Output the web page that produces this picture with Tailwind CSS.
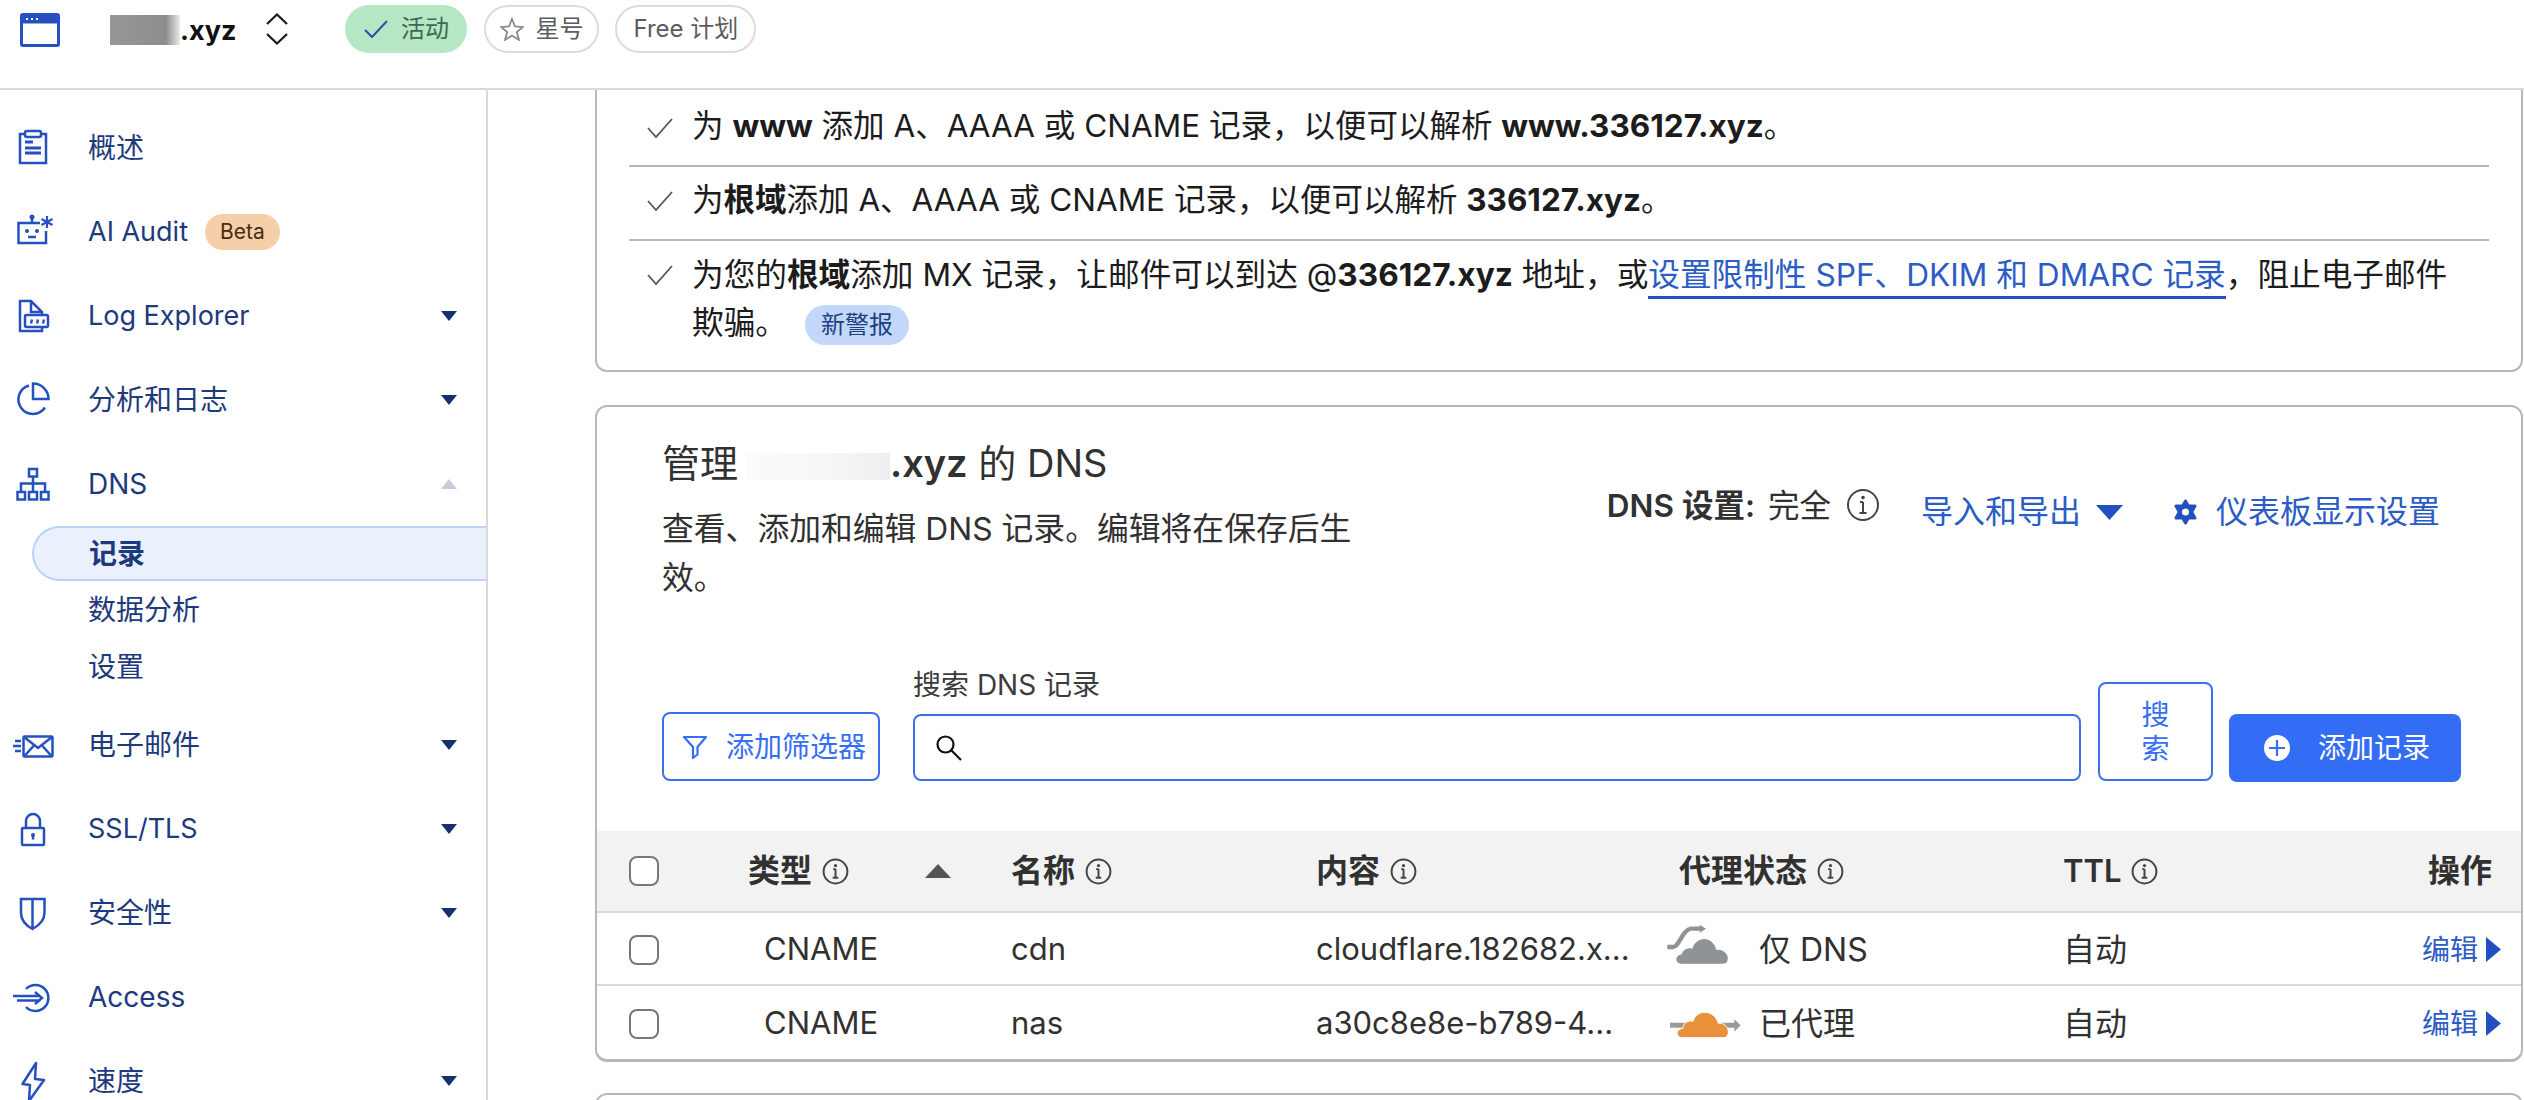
<!DOCTYPE html>
<html lang="zh-CN">
<head>
<meta charset="utf-8">
<title>DNS</title>
<script src="https://cdn.jsdelivr.net/npm/@tailwindcss/browser@4"></script>
</head>
<body class="bg-white">
<div class="w-[2524px] h-[1100px] overflow-hidden flex flex-col bg-white font-[family-name:Inter,'Noto_Sans_CJK_SC',sans-serif]">

  <!-- top bar -->
  <header class="h-[90px] shrink-0 border-b-2 border-[#d9d9d9] flex items-center pb-[31px] pl-[20px]">
    <svg width="40" height="34" viewBox="0 0 40 34" fill="none" class="mt-[2px]"><rect x="1.5" y="1.5" width="37" height="31" rx="1.5" stroke="#2450c0" stroke-width="3"/><rect x="1.5" y="1.5" width="37" height="9" fill="#2450c0"/><path d="M6 6h2M11 6h2M16 6h2" stroke="#fff" stroke-width="2"/></svg>
    <div class="ml-[50px] w-[70px] h-[30px] mt-[2px] bg-linear-to-r from-[#979797] via-[#8e8e8e] via-80% to-[#ececec]"></div>
    <span class="text-[27px] font-bold text-[#111] leading-none mt-[3px]">.xyz</span>
    <svg width="24" height="32" viewBox="0 0 24 32" fill="none" class="ml-[29px] mt-[1px]"><path d="M2 11 12 1.5 22 11M2 21l10 9.500L22 21" stroke="#1a1a1a" stroke-width="2.200"/></svg>
    <div class="ml-[56px] w-[122px] h-[48px] rounded-full bg-[#b6e7c5] flex items-center justify-center gap-[13px] text-[24px] text-[#3d6a50]">
      <svg width="24" height="18" viewBox="0 0 24 18" fill="none"><path d="M1 10l7 7L23 1" stroke="#2450a8" stroke-width="2"/></svg><span>活动</span>
    </div>
    <div class="ml-[17px] w-[115px] h-[48px] rounded-full border-2 border-[#dcdcdc] flex items-center justify-center gap-[11px] text-[24px] text-[#5c5c5c]">
      <svg width="24" height="24" viewBox="0 0 24 24" fill="none"><path d="M12 2l3 7.500 8 .5-6.200 5 2.200 8L12 18.500 5 23l2.200-8L1 10l8-.5z" stroke="#8a8a8a" stroke-width="1.800"/></svg><span>星号</span>
    </div>
    <div class="ml-[16px] w-[141px] h-[48px] rounded-full border-2 border-[#dcdcdc] flex items-center justify-center text-[24px] text-[#5c5c5c]">Free 计划</div>
  </header>

  <div class="flex-1 flex min-h-0">
    <!-- sidebar -->
    <nav class="w-[488px] shrink-0 border-r-2 border-[#d9d9d9] pt-[16px] text-[28px] text-[#1d3a7c] overflow-hidden">
      <div class="h-[84px] flex items-center">
        <svg width="66" height="44" viewBox="0 0 66 44" fill="none" stroke="#2450c0" stroke-width="2.500"><path d="M25 8h-5v29h26V8h-5"/><rect x="25" y="5" width="16" height="6" rx="2"/><path d="M25 16h8M25 22h16M25 27h16" stroke-width="2.800"/></svg>
        <span class="ml-[22px]">概述</span>
      </div>
      <div class="h-[84px] flex items-center">
        <svg width="66" height="44" viewBox="0 0 66 44" fill="none" stroke="#2450c0" stroke-width="2.500"><path d="M40 13H18.500v20H46V21"/><path d="M32 7v6"/><circle cx="32" cy="7" r="2.500" fill="#2450c0" stroke="none"/><circle cx="27" cy="21" r="2" fill="#2450c0" stroke="none"/><circle cx="37" cy="21" r="2" fill="#2450c0" stroke="none"/><path d="M28 27h8"/><path d="M47 6v12M41.500 9l11 6M52.500 9l-11 6" stroke-width="2.200"/></svg>
        <span class="ml-[22px] text-[27px]">AI Audit</span>
        <span class="ml-[17px] w-[75px] h-[36px] rounded-full bg-[#f5cfa7] text-[#4a2c10] text-[21px] flex items-center justify-center">Beta</span>
      </div>
      <div class="h-[84px] flex items-center">
        <svg width="66" height="44" viewBox="0 0 66 44" fill="none" stroke="#2450c0" stroke-width="2.500"><path d="M25 37h-5V7h11l11 11v3M42 33v4H25M31 7v11h11"/><rect x="25" y="21" width="23" height="12" rx="1.500"/><path d="M31 29.500l1-4M37 29.500l1-4M43 29.500l1-4" stroke-width="2.400"/></svg>
        <span class="ml-[22px] flex-1 text-[27px]">Log Explorer</span>
        <svg width="16" height="10" viewBox="0 0 16 10" class="mr-[29px]"><path d="M0 0h16L8 10z" fill="#16306e"/></svg>
      </div>
      <div class="h-[84px] flex items-center">
        <svg width="66" height="44" viewBox="0 0 66 44" fill="none" stroke="#2450c0" stroke-width="2.500"><path d="M33 5.500V21h15.500A15.500 15.500 0 0 0 33 5.500z"/><path d="M29 7.500A14.500 14.500 0 1 0 45 29.500"/></svg>
        <span class="ml-[22px] flex-1">分析和日志</span>
        <svg width="16" height="10" viewBox="0 0 16 10" class="mr-[29px]"><path d="M0 0h16L8 10z" fill="#16306e"/></svg>
      </div>
      <div class="h-[84px] flex items-center">
        <svg width="66" height="44" viewBox="0 0 66 44" fill="none" stroke="#2450c0" stroke-width="2.500"><rect x="29" y="7" width="8" height="7.500"/><rect x="17.500" y="30" width="7.500" height="7.500"/><rect x="29" y="30" width="8" height="7.500"/><rect x="41" y="30" width="7.500" height="7.500"/><path d="M33 14.500V30M21 30v-8.500h24V30"/></svg>
        <span class="ml-[22px] flex-1">DNS</span>
        <svg width="16" height="10" viewBox="0 0 16 10" class="mr-[29px]"><path d="M0 10h16L8 0z" fill="#c8ced9"/></svg>
      </div>
      <div class="h-[55px] ml-[32px] pl-[55px] flex items-center font-semibold bg-[#eaf1fd] border-2 border-r-0 border-[#bcd3f7] rounded-l-full">记录</div>
      <div class="h-[57px] pl-[88px] flex items-center">数据分析</div>
      <div class="h-[57px] pl-[88px] flex items-center">设置</div>
      <div class="h-[84px] mt-[8px] flex items-center">
        <svg width="66" height="44" viewBox="0 0 66 44" fill="none" stroke="#2450c0" stroke-width="2.500"><rect x="23.500" y="13.500" width="29" height="20" rx="1"/><path d="M24 14l14 11 14-11M24.500 33l9-10M51.500 33l-9-10"/><path d="M15 18h6M13 23h8M15 28h6"/></svg>
        <span class="ml-[22px] flex-1">电子邮件</span>
        <svg width="16" height="10" viewBox="0 0 16 10" class="mr-[29px]"><path d="M0 0h16L8 10z" fill="#16306e"/></svg>
      </div>
      <div class="h-[84px] flex items-center">
        <svg width="66" height="44" viewBox="0 0 66 44" fill="none" stroke="#2450c0" stroke-width="2.500"><rect x="22" y="21" width="22" height="17" rx="1"/><path d="M26 21v-7a7 7 0 0 1 14 0v7"/><circle cx="33" cy="28" r="2" fill="#2450c0" stroke="none"/><path d="M33 28v4.500"/></svg>
        <span class="ml-[22px] flex-1 text-[27px]">SSL/TLS</span>
        <svg width="16" height="10" viewBox="0 0 16 10" class="mr-[29px]"><path d="M0 0h16L8 10z" fill="#16306e"/></svg>
      </div>
      <div class="h-[84px] flex items-center">
        <svg width="66" height="44" viewBox="0 0 66 44" fill="none" stroke="#2450c0" stroke-width="2.500"><path d="M21 8h23.500v14c0 8-6.500 13-12 16-5.500-3-11.500-8-11.500-16zM32.500 8v30"/></svg>
        <span class="ml-[22px] flex-1">安全性</span>
        <svg width="16" height="10" viewBox="0 0 16 10" class="mr-[29px]"><path d="M0 0h16L8 10z" fill="#16306e"/></svg>
      </div>
      <div class="h-[84px] flex items-center">
        <svg width="66" height="44" viewBox="0 0 66 44" fill="none" stroke="#2450c0" stroke-width="2.500"><path d="M26 14a13 13 0 1 1 0 18"/><path d="M13 21h27M17 25.500h23M35 17l7 6-7 6"/></svg>
        <span class="ml-[22px]">Access</span>
      </div>
      <div class="h-[84px] flex items-center">
        <svg width="66" height="44" viewBox="0 0 66 44" fill="none" stroke="#2450c0" stroke-width="2.500" stroke-linejoin="round"><path d="M36 4 22.500 25l7.500 1-1 16 15-21-9-1z"/></svg>
        <span class="ml-[22px] flex-1">速度</span>
        <svg width="16" height="10" viewBox="0 0 16 10" class="mr-[29px]"><path d="M0 0h16L8 10z" fill="#16306e"/></svg>
      </div>
    </nav>

    <!-- main -->
    <main class="flex-1 min-w-0 pl-[107px] pr-[1px] overflow-hidden">
      <!-- checklist card -->
      <section class="h-[282px] border-2 border-t-0 border-[#b8b8b8] rounded-b-[12px] px-[32px] text-[31.5px] leading-[48px] text-[#1c1c1c]">
        <div class="h-[77px] border-b-2 border-[#b8b8b8] pt-[12px] flex">
          <svg width="26" height="20" viewBox="0 0 26 20" fill="none" class="ml-[18px] mt-[16px] shrink-0"><path d="M1 10l8 9L25 1" stroke="#555" stroke-width="1.800"/></svg>
          <p class="ml-[19px]">为 <b class="font-bold">www</b> 添加 A、AAAA 或 CNAME 记录，以便可以解析 <b class="font-bold">www.336127.xyz</b>。</p>
        </div>
        <div class="h-[74px] border-b-2 border-[#b8b8b8] pt-[9px] flex">
          <svg width="26" height="20" viewBox="0 0 26 20" fill="none" class="ml-[18px] mt-[15px] shrink-0"><path d="M1 10l8 9L25 1" stroke="#555" stroke-width="1.800"/></svg>
          <p class="ml-[19px]">为<b class="font-bold">根域</b>添加 A、AAAA 或 CNAME 记录，以便可以解析 <b class="font-bold">336127.xyz</b>。</p>
        </div>
        <div class="pt-[10px] flex">
          <svg width="26" height="20" viewBox="0 0 26 20" fill="none" class="ml-[18px] mt-[14px] shrink-0"><path d="M1 10l8 9L25 1" stroke="#555" stroke-width="1.800"/></svg>
          <p class="ml-[19px] w-[1770px] h-[96px] text-[31.65px]">为您的<b class="font-bold">根域</b>添加 MX 记录，让邮件可以到达 @<b class="font-bold">336127.xyz</b> 地址，或<a class="text-[#2c5cc5] border-b-[3px] border-[#2250c0] pb-[2px]">设置限制性 SPF、DKIM 和 DMARC 记录</a>，阻止电子邮件欺骗。<span class="inline-block align-middle ml-[18px] w-[104px] h-[40px] rounded-full bg-[#c3d8f8] text-[#1d3f80] text-[24px] leading-[40px] text-center">新警报</span></p>
        </div>
      </section>

      <!-- DNS card -->
      <section class="mt-[33px] border-2 border-b-[3px] border-[#b8b8b8] rounded-[12px] overflow-hidden">
        <div class="h-[195px] flex justify-between pl-[65px] pr-[81px] pt-[32px]">
          <div class="w-[700px] text-[#313131]">
            <h2 class="h-[48px] text-[38px] leading-[48px]">管理<span class="inline-block align-middle ml-[9px] w-[143px] h-[27px] bg-linear-to-r from-[#fbfbfb] via-[#f8f8f8] to-[#eeeeee]"></span><b class="font-semibold">.xyz</b> 的 DNS</h2>
            <p class="h-[98px] mt-[17px] text-[31.8px] leading-[49px]">查看、添加和编辑 DNS 记录。编辑将在保存后生效。</p>
          </div>
          <div class="flex items-start mt-[43px]">
            <span class="text-[31.5px] leading-[48px] text-[#313131] font-semibold">DNS 设置:</span>
            <span class="ml-[13px] text-[31.5px] leading-[48px] text-[#313131]">完全</span>
            <svg width="34" height="34" viewBox="0 0 34 34" fill="none" class="ml-[15px] mt-[6px]"><circle cx="17" cy="17" r="15" stroke="#444" stroke-width="2"/><path d="M17 14v11M13.500 25h7M14 14h3" stroke="#444" stroke-width="2"/><circle cx="17" cy="9.500" r="1.800" fill="#444"/></svg>
            <span class="ml-[41px] mt-[6px] text-[32px] leading-[48px] text-[#2c5cc5]">导入和导出</span>
            <svg width="27" height="15" viewBox="0 0 27 15" class="ml-[15px] mt-[23px]"><path d="M0 0h27L13.500 15z" fill="#2250c0"/></svg>
            <svg width="27" height="28" viewBox="0 0 27 28" class="ml-[49px] mt-[16px]"><path d="M13.500 3 23 20H4zM13.500 25 4 8h19z" fill="#2250c0" stroke="#2250c0" stroke-width="3" stroke-linejoin="round"/><circle cx="13.500" cy="14" r="3.500" fill="#fff"/></svg>
            <span class="ml-[17px] mt-[6px] text-[32px] leading-[48px] text-[#2c5cc5]">仪表板显示设置</span>
          </div>
        </div>

        <div class="mt-[66px] pl-[65px] flex items-end">
          <button class="w-[218px] h-[69px] border-2 border-[#3b6ef0] rounded-[8px] flex items-center pl-[18px] text-[28px] text-[#356ef5]">
            <svg width="26" height="24" viewBox="0 0 26 24" fill="none"><path d="M2 2h22l-8.500 10v7.500L11 23V12z" stroke="#356ef5" stroke-width="2.200" stroke-linejoin="round"/></svg>
            <span class="ml-[18px]">添加筛选器</span>
          </button>
          <div class="ml-[33px] w-[1168px]">
            <label class="block text-[28px] leading-[34px] text-[#3c3c3c] mb-[12px]">搜索 DNS 记录</label>
            <div class="h-[67px] border-2 border-[#3b6ef0] rounded-[8px] flex items-center pl-[20px]">
              <svg width="28" height="28" viewBox="0 0 28 28" fill="none"><circle cx="10.500" cy="10.500" r="8" stroke="#111" stroke-width="2.200"/><path d="M16.500 16.500 26 26" stroke="#111" stroke-width="2.200"/></svg>
            </div>
          </div>
          <button class="ml-[17px] w-[115px] h-[99px] border-2 border-[#3b6ef0] rounded-[8px] px-[41px] text-[28px] leading-[34px] text-[#356ef5]">搜索</button>
          <button class="ml-[16px] w-[232px] h-[68px] -mb-[1px] bg-[#336df6] rounded-[8px] flex items-center pl-[35px] text-[28px] text-white">
            <svg width="26" height="26" viewBox="0 0 26 26"><circle cx="13" cy="13" r="13" fill="#fff"/><path d="M13 5v16M5 13h16" stroke="#336df6" stroke-width="2.200"/></svg>
            <span class="ml-[28px]">添加记录</span>
          </button>
        </div>

        <!-- table -->
        <div class="mt-[50px] text-[32px] text-[#313131]">
          <div class="h-[82px] bg-[#f2f2f2] border-b-2 border-[#d9d9d9] grid grid-cols-[151px_263px_305px_363px_384px_1fr] items-center font-semibold">
            <div class="pl-[32px]"><span class="block w-[30px] h-[30px] border-2 border-[#777] rounded-[8px] bg-white"></span></div>
            <div class="flex items-center"><span>类型</span><svg width="27" height="27" viewBox="0 0 34 34" fill="none" class="ml-[10px]"><circle cx="17" cy="17" r="15" stroke="#444" stroke-width="2.500"/><path d="M17 14v11M13.500 25h7M14 14h3" stroke="#444" stroke-width="2.500"/><circle cx="17" cy="9.500" r="2" fill="#444"/></svg><svg width="26" height="14" viewBox="0 0 26 14" class="ml-[76px]"><path d="M13 0l13 14H0z" fill="#555"/></svg></div>
            <div class="flex items-center"><span>名称</span><svg width="27" height="27" viewBox="0 0 34 34" fill="none" class="ml-[10px]"><circle cx="17" cy="17" r="15" stroke="#444" stroke-width="2.500"/><path d="M17 14v11M13.500 25h7M14 14h3" stroke="#444" stroke-width="2.500"/><circle cx="17" cy="9.500" r="2" fill="#444"/></svg></div>
            <div class="flex items-center"><span>内容</span><svg width="27" height="27" viewBox="0 0 34 34" fill="none" class="ml-[10px]"><circle cx="17" cy="17" r="15" stroke="#444" stroke-width="2.500"/><path d="M17 14v11M13.500 25h7M14 14h3" stroke="#444" stroke-width="2.500"/><circle cx="17" cy="9.500" r="2" fill="#444"/></svg></div>
            <div class="flex items-center"><span>代理状态</span><svg width="27" height="27" viewBox="0 0 34 34" fill="none" class="ml-[10px]"><circle cx="17" cy="17" r="15" stroke="#444" stroke-width="2.500"/><path d="M17 14v11M13.500 25h7M14 14h3" stroke="#444" stroke-width="2.500"/><circle cx="17" cy="9.500" r="2" fill="#444"/></svg></div>
            <div class="flex items-center"><span class="text-[31px]">TTL</span><svg width="27" height="27" viewBox="0 0 34 34" fill="none" class="ml-[10px]"><circle cx="17" cy="17" r="15" stroke="#444" stroke-width="2.500"/><path d="M17 14v11M13.500 25h7M14 14h3" stroke="#444" stroke-width="2.500"/><circle cx="17" cy="9.500" r="2" fill="#444"/></svg><span class="ml-auto mr-[29px]">操作</span></div>
          </div>
          <div class="h-[73px] pt-[2px] border-b-2 border-[#d9d9d9] grid grid-cols-[151px_263px_305px_363px_384px_1fr] items-center">
            <div class="pl-[32px]"><span class="block w-[30px] h-[30px] border-2 border-[#777] rounded-[8px]"></span></div>
            <div class="pl-[16px] text-[31px]">CNAME</div>
            <div class="text-[31px]">cdn</div>
            <div class="text-[31px]">cloudflare.182682.x...</div>
            <div class="flex items-center -ml-[20px]">
              <svg width="100" height="54" viewBox="0 21 300 162"><path d="M25 93h17c18 0 28-51 53-55h30" fill="none" stroke="#8f9297" stroke-width="13"/><path d="M122 26l19 12-19 12z" fill="#8f9297"/><path d="M66 143C48 143 46 118 68 115 72 100 88 94 100 98 110 62 160 55 172 102 195 98 212 120 205 135 203 141 198 143 192 143z" fill="#8f9297"/></svg>
              <span>仅 DNS</span>
            </div>
            <div class="flex items-center"><span>自动</span><a class="ml-auto mr-[20px] flex items-center text-[28px] text-[#2c5cc5]">编辑<svg width="15" height="25" viewBox="0 0 15 25" class="ml-[8px]"><path d="M0 0l15 12.500L0 25z" fill="#2250c0"/></svg></a></div>
          </div>
          <div class="h-[73px] pt-[2px] grid grid-cols-[151px_263px_305px_363px_384px_1fr] items-center">
            <div class="pl-[32px]"><span class="block w-[30px] h-[30px] border-2 border-[#777] rounded-[8px]"></span></div>
            <div class="pl-[16px] text-[31px]">CNAME</div>
            <div class="text-[31px]">nas</div>
            <div class="text-[31px]">a30c8e8e-b789-4...</div>
            <div class="flex items-center -ml-[20px]">
              <svg width="100" height="54" viewBox="0 243 300 162"><path d="M33 320h195v15H33z" fill="#9a9a9a"/><path d="M226 310l19 18-19 19z" fill="#9a9a9a"/><path d="M70 365C50 365 48 340 72 337 72 320 90 312 102 316 112 280 165 278 178 322 200 318 215 345 205 358 203 363 198 365 192 365z" fill="#e8913a" stroke="#fff" stroke-width="3"/></svg>
              <span>已代理</span>
            </div>
            <div class="flex items-center"><span>自动</span><a class="ml-auto mr-[20px] flex items-center text-[28px] text-[#2c5cc5]">编辑<svg width="15" height="25" viewBox="0 0 15 25" class="ml-[8px]"><path d="M0 0l15 12.500L0 25z" fill="#2250c0"/></svg></a></div>
          </div>
        </div>
      </section>

      <section class="mt-[31px] h-[40px] border-2 border-b-0 border-[#b8b8b8] rounded-t-[12px]"></section>
    </main>
  </div>
</div>
</body>
</html>
